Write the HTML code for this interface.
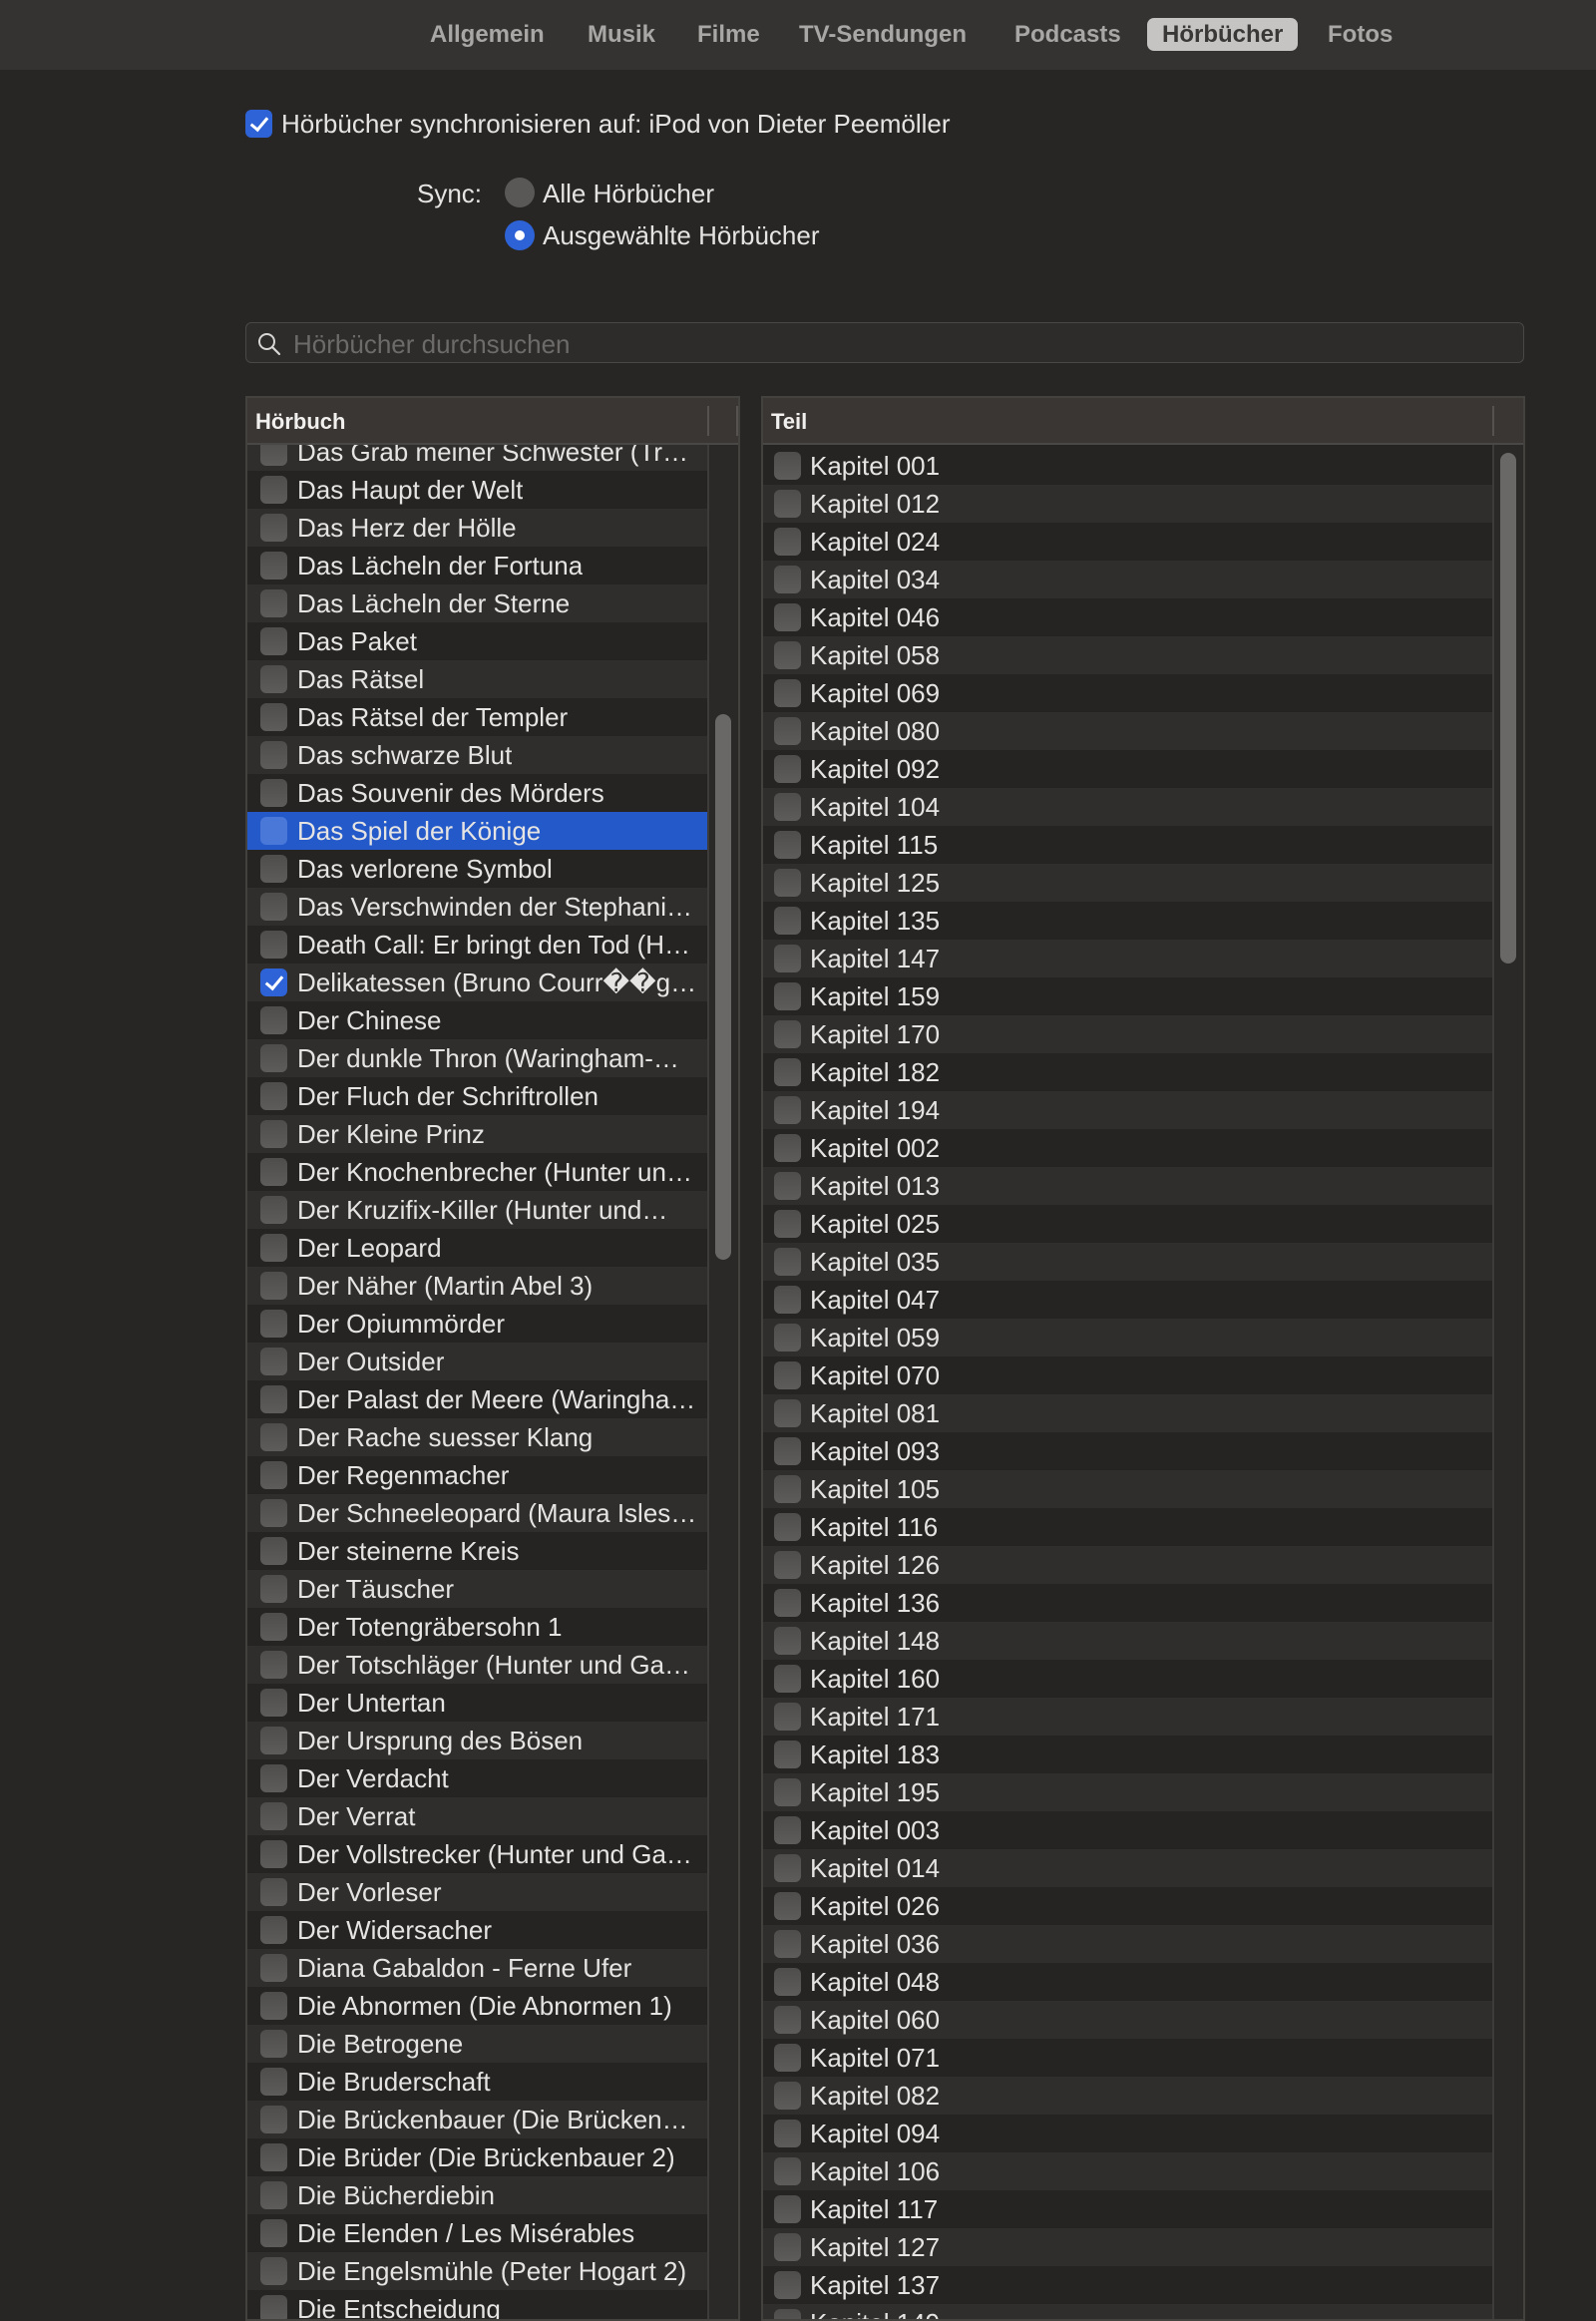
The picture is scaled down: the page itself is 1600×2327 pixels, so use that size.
<!DOCTYPE html>
<html><head><meta charset="utf-8">
<style>
*{margin:0;padding:0;box-sizing:border-box}
html,body{width:1600px;height:2322px;overflow:hidden;background:#282624;font-family:"Liberation Sans",sans-serif;color:#e6e4e2}
.top{position:absolute;left:0;top:0;width:1600px;height:70px;background:#353331}
.tab{position:absolute;top:18px;height:33px;line-height:33px;font-size:24px;font-weight:bold;color:#a9a7a5}
.tab.sel{background:#c6c4c2;color:#3a3836;border-radius:7px;padding:0 15px}
.cb{position:absolute;width:27px;height:28px;border-radius:6px;background:linear-gradient(#4f4d4b,#5e5c5a)}
.cb.on{background:#2d63d6}
.cb.on::after{content:"";position:absolute;left:9px;top:4px;width:7px;height:14px;border:solid #fff;border-width:0 3px 3px 0;transform:rotate(40deg)}
.txt{position:absolute;font-size:26px;white-space:nowrap}
.radio{position:absolute;width:30px;height:30px;border-radius:50%;background:#5a5856}
.radio.on{background:#2d63d6}
.radio.on::after{content:"";position:absolute;left:10px;top:10px;width:10px;height:10px;border-radius:50%;background:#fff}
.search{position:absolute;left:246px;top:323px;width:1282px;height:41px;border:1px solid #4a4846;border-radius:6px;background:#2e2c2a}
.tbl{position:absolute;top:397px;height:1930px;border:2px solid #44423f;background:#262422;overflow:hidden}
.hdr{position:absolute;left:0;top:0;right:0;height:47px;background:#3a3634;border-bottom:2px solid #4a4846;font-size:22px;font-weight:bold;line-height:47px;padding-left:8px;color:#f2f0ee}
.vl{position:absolute;top:8px;width:2px;height:30px;background:#55524f}
.rows{position:absolute;left:0;right:31px;top:47px;bottom:0;overflow:hidden}
.row{position:absolute;left:0;right:0;height:38px;font-size:26px;line-height:38px;white-space:nowrap}
.row.l{background:#302e2c}
.row.d{background:#262422}
.row.s{background:#2459c9}
.row .cb{top:5px}
.row span{position:absolute;overflow:hidden;text-overflow:ellipsis}
.track{position:absolute;right:0;top:47px;bottom:0;width:31px;background:#2a2928;border-left:2px solid #3e3c3a}
.thumb{position:absolute;left:6px;width:16px;border-radius:8px;background:#6a6866}
</style></head><body>
<div class="top">
<div class="tab" style="left:431px">Allgemein</div>
<div class="tab" style="left:589px">Musik</div>
<div class="tab" style="left:699px">Filme</div>
<div class="tab" style="left:801px">TV-Sendungen</div>
<div class="tab" style="left:1017px">Podcasts</div>
<div class="tab sel" style="left:1150px">Hörbücher</div>
<div class="tab" style="left:1331px">Fotos</div>
</div>

<div class="cb on" style="left:246px;top:110px"></div>
<div class="txt" style="left:282px;top:109px">Hörbücher synchronisieren auf: iPod von Dieter Peemöller</div>
<div class="txt" style="left:418px;top:179px">Sync:</div>
<div class="radio" style="left:506px;top:178px"></div>
<div class="txt" style="left:544px;top:179px">Alle Hörbücher</div>
<div class="radio on" style="left:506px;top:221px"></div>
<div class="txt" style="left:544px;top:221px">Ausgewählte Hörbücher</div>

<div class="search">
<svg style="position:absolute;left:10px;top:8px" width="26" height="26" viewBox="0 0 26 26"><circle cx="10.5" cy="10.5" r="7.5" fill="none" stroke="#d8d6d4" stroke-width="2"/><line x1="16" y1="16" x2="23" y2="23" stroke="#d8d6d4" stroke-width="2.2" stroke-linecap="round"/></svg>
<div class="txt" style="left:47px;top:6px;color:#6d6b69">Hörbücher durchsuchen</div>
</div>

<div class="tbl" style="left:246px;width:496px">
<div class="hdr">Hörbuch<div class="vl" style="left:461px"></div><div class="vl" style="left:490px"></div></div>
<div class="rows" id="L"></div>
<div class="track"><div class="thumb" style="top:270px;height:547px"></div></div>
</div>

<div class="tbl" style="left:763px;width:766px">
<div class="hdr">Teil<div class="vl" style="left:731px"></div></div>
<div class="rows" id="R"></div>
<div class="track"><div class="thumb" style="top:8px;height:512px"></div></div>
</div>

<script>
var L=["Das Grab meiner Schwester (Tr…","Das Haupt der Welt","Das Herz der Hölle","Das Lächeln der Fortuna","Das Lächeln der Sterne","Das Paket","Das Rätsel","Das Rätsel der Templer","Das schwarze Blut","Das Souvenir des Mörders","Das Spiel der Könige","Das verlorene Symbol","Das Verschwinden der Stephani…","Death Call: Er bringt den Tod (H…","Delikatessen (Bruno Courr��g…","Der Chinese","Der dunkle Thron (Waringham-…","Der Fluch der Schriftrollen","Der Kleine Prinz","Der Knochenbrecher (Hunter un…","Der Kruzifix-Killer (Hunter und…","Der Leopard","Der Näher (Martin Abel 3)","Der Opiummörder","Der Outsider","Der Palast der Meere (Waringha…","Der Rache suesser Klang","Der Regenmacher","Der Schneeleopard (Maura Isles…","Der steinerne Kreis","Der Täuscher","Der Totengräbersohn 1","Der Totschläger (Hunter und Ga…","Der Untertan","Der Ursprung des Bösen","Der Verdacht","Der Verrat","Der Vollstrecker (Hunter und Ga…","Der Vorleser","Der Widersacher","Diana Gabaldon - Ferne Ufer","Die Abnormen (Die Abnormen 1)","Die Betrogene","Die Bruderschaft","Die Brückenbauer (Die Brücken…","Die Brüder (Die Brückenbauer 2)","Die Bücherdiebin","Die Elenden / Les Misérables","Die Engelsmühle (Peter Hogart 2)","Die Entscheidung"];
var h="";
for(var i=0;i<L.length;i++){var y=-12+i*38;var c=(i%2==0)?"l":"d";if(i==10)c="s";
h+='<div class="row '+c+'" style="top:'+y+'px"><div class="cb'+(i==14?' on':'')+'" style="left:13px'+(i==10?';background:#4a78d8':'')+'"></div><span style="left:50px;max-width:408px">'+L[i]+'</span></div>';}
document.getElementById("L").innerHTML=h;
var R=["001","012","024","034","046","058","069","080","092","104","115","125","135","147","159","170","182","194","002","013","025","035","047","059","070","081","093","105","116","126","136","148","160","171","183","195","003","014","026","036","048","060","071","082","094","106","117","127","137","149"];
h="";
for(var i=0;i<R.length;i++){var y=2+i*38;var c=(i%2==0)?"d":"l";
h+='<div class="row '+c+'" style="top:'+y+'px"><div class="cb" style="left:11px"></div><span style="left:47px">Kapitel '+R[i]+'</span></div>';}
document.getElementById("R").innerHTML=h;
</script>
</body></html>
